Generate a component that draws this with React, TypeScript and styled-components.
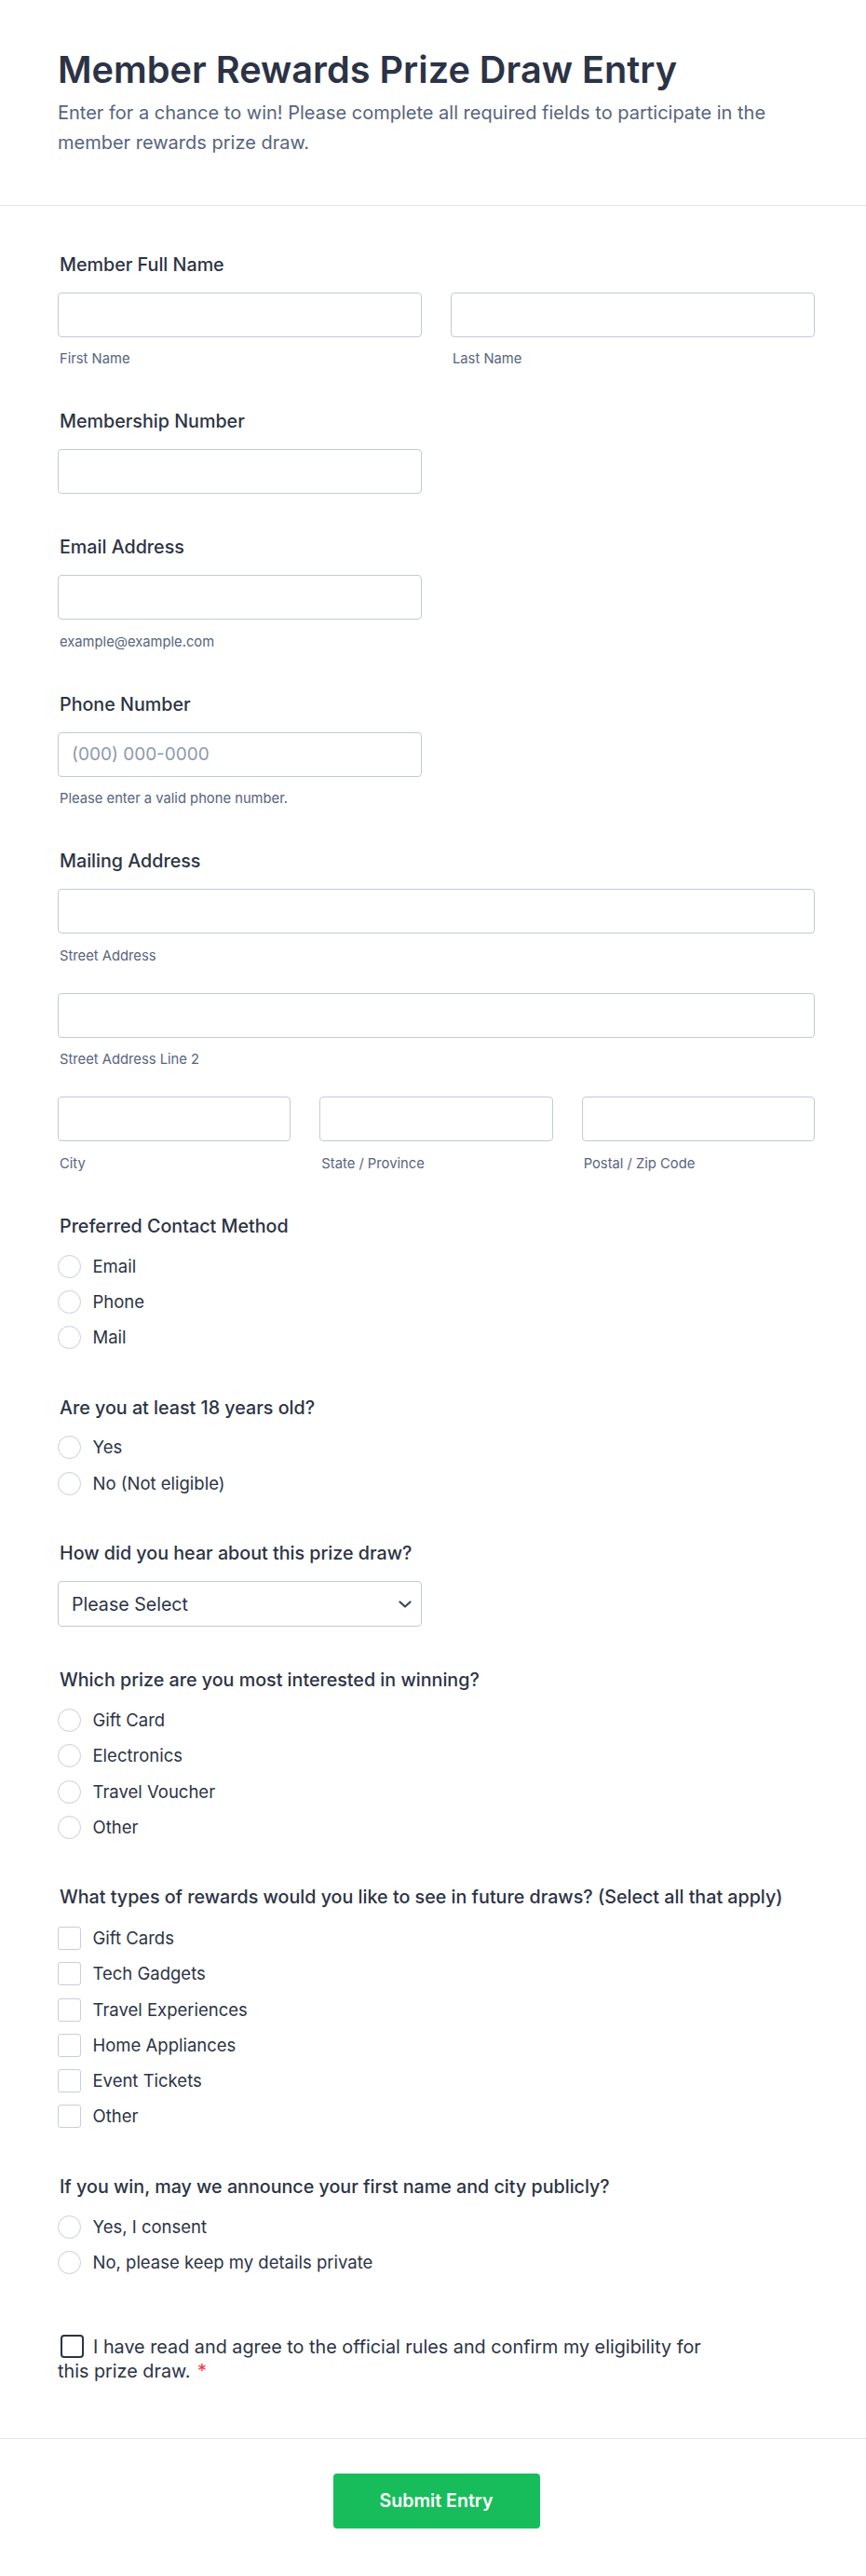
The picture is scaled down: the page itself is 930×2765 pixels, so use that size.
import styled, { createGlobalStyle } from 'styled-components'

const GlobalStyle = createGlobalStyle`
  * {
    box-sizing: border-box;
  }
  body {
    margin: 0;
    background: #ffffff;
    font-family: Inter, "Noto Sans", sans-serif;
    color: #2c3345;
  }
`

const contactMethods = ['Email', 'Phone', 'Mail']
const ageOptions = ['Yes', 'No (Not eligible)']
const prizes = ['Gift Card', 'Electronics', 'Travel Voucher', 'Other']
const rewardTypes = ['Gift Cards', 'Tech Gadgets', 'Travel Experiences', 'Home Appliances', 'Event Tickets', 'Other']
const announceOptions = ['Yes, I consent', 'No, please keep my details private']

const ChevronDown = () => (
  <svg width="14" height="8" viewBox="0 0 14 8" fill="none">
    <path d="M1.5 1.5L7 6.5L12.5 1.5" stroke="#3d475c" strokeWidth="2.2" strokeLinecap="round" strokeLinejoin="round" />
  </svg>
)

const RadioGroup = ({ name, options }: { name: string; options: string[] }) => (
  <OptionList>
    {options.map((opt) => (
      <OptionRow key={opt}>
        <Radio type="radio" name={name} />
        <OptionText>{opt}</OptionText>
      </OptionRow>
    ))}
  </OptionList>
)

export default function App() {
  return (
    <Page>
      <GlobalStyle />
      <Header>
        <Title>Member Rewards Prize Draw Entry</Title>
        <Description>
          Enter for a chance to win! Please complete all required fields to participate in the member rewards prize
          draw.
        </Description>
      </Header>

      <FormBody>
        <Field>
          <FieldLabel>Member Full Name</FieldLabel>
          <Columns $cols={2}>
            <div>
              <TextInput />
              <SubLabel>First Name</SubLabel>
            </div>
            <div>
              <TextInput />
              <SubLabel>Last Name</SubLabel>
            </div>
          </Columns>
        </Field>

        <Field>
          <FieldLabel>Membership Number</FieldLabel>
          <Columns $cols={2}>
            <TextInput />
          </Columns>
        </Field>

        <Field>
          <FieldLabel>Email Address</FieldLabel>
          <Columns $cols={2}>
            <div>
              <TextInput type="email" />
              <SubLabel>example@example.com</SubLabel>
            </div>
          </Columns>
        </Field>

        <Field>
          <FieldLabel>Phone Number</FieldLabel>
          <Columns $cols={2}>
            <div>
              <TextInput type="tel" placeholder="(000) 000-0000" />
              <SubLabel>Please enter a valid phone number.</SubLabel>
            </div>
          </Columns>
        </Field>

        <Field>
          <FieldLabel>Mailing Address</FieldLabel>
          <AddressStack>
            <div>
              <TextInput />
              <SubLabel>Street Address</SubLabel>
            </div>
            <div>
              <TextInput />
              <SubLabel>Street Address Line 2</SubLabel>
            </div>
            <Columns $cols={3}>
              <div>
                <TextInput />
                <SubLabel>City</SubLabel>
              </div>
              <div>
                <TextInput />
                <SubLabel>State / Province</SubLabel>
              </div>
              <div>
                <TextInput />
                <SubLabel>Postal / Zip Code</SubLabel>
              </div>
            </Columns>
          </AddressStack>
        </Field>

        <Field>
          <FieldLabel $gap={16.8}>Preferred Contact Method</FieldLabel>
          <RadioGroup name="contact" options={contactMethods} />
        </Field>

        <Field>
          <FieldLabel $gap={16.8}>Are you at least 18 years old?</FieldLabel>
          <RadioGroup name="age" options={ageOptions} />
        </Field>

        <Field>
          <FieldLabel>How did you hear about this prize draw?</FieldLabel>
          <Columns $cols={2}>
            <SelectWrap>
              <Select defaultValue="">
                <option value="">Please Select</option>
              </Select>
              <SelectIcon>
                <ChevronDown />
              </SelectIcon>
            </SelectWrap>
          </Columns>
        </Field>

        <Field>
          <FieldLabel $gap={16.8}>Which prize are you most interested in winning?</FieldLabel>
          <RadioGroup name="prize" options={prizes} />
        </Field>

        <Field>
          <FieldLabel $gap={17.5}>
            What types of rewards would you like to see in future draws? (Select all that apply)
          </FieldLabel>
          <OptionList $pitch={38.3}>
            {rewardTypes.map((opt) => (
              <OptionRow key={opt}>
                <Checkbox type="checkbox" />
                <OptionText>{opt}</OptionText>
              </OptionRow>
            ))}
          </OptionList>
        </Field>

        <Field>
          <FieldLabel $gap={16.8}>If you win, may we announce your first name and city publicly?</FieldLabel>
          <RadioGroup name="announce" options={announceOptions} />
        </Field>

        <ConsentField>
          <ConsentText>
            <ConsentBox type="checkbox" />I have read and agree to the official rules and confirm my eligibility for
            this prize draw. <Asterisk>*</Asterisk>
          </ConsentText>
        </ConsentField>
      </FormBody>

      <Footer>
        <SubmitButton type="button">Submit Entry</SubmitButton>
      </Footer>
    </Page>
  )
}

const Page = styled.div`
  width: 930px;
  min-height: 2765px;
  background: #ffffff;
`

const Header = styled.header`
  padding: 52px 55px 50px 62px;
  border-bottom: 1px solid #e3e5ea;
`

const Title = styled.h1`
  margin: 0;
  font-size: 39.7px;
  line-height: 47.6px;
  font-weight: 600;
  color: #2c3345;
`

const Description = styled.p`
  margin: 5.4px 0 0;
  font-size: 20px;
  line-height: 32.4px;
  color: #57647e;
`

const FormBody = styled.div`
  display: flex;
  flex-direction: column;
  gap: 44px;
  padding: 50px 55px 59px 62px;
`

const Field = styled.div`
  display: flex;
  flex-direction: column;
`

const FieldLabel = styled.label<{ $gap?: number }>`
  padding-left: 2px;
  font-size: 19.7px;
  line-height: 27px;
  font-weight: 500;
  color: #2c3345;
  margin-bottom: ${(p) => p.$gap ?? 16}px;
`

const Columns = styled.div<{ $cols: number }>`
  display: grid;
  grid-template-columns: repeat(${(p) => p.$cols}, 1fr);
  column-gap: 31px;
`

const AddressStack = styled.div`
  display: flex;
  flex-direction: column;
  gap: 30px;
`

const TextInput = styled.input`
  display: block;
  width: 100%;
  height: 48px;
  padding: 0 14px;
  border: 1px solid #c3cad8;
  border-radius: 4px;
  background: #ffffff;
  font-family: inherit;
  font-size: 19px;
  color: #2c3345;
  outline: none;

  &::placeholder {
    color: #8d99b0;
  }
`

const SubLabel = styled.div`
  margin-top: 14.5px;
  padding-left: 2px;
  font-size: 14.75px;
  line-height: 19px;
  color: #57647e;
`

const OptionList = styled.div<{ $pitch?: number }>`
  display: flex;
  flex-direction: column;
  gap: ${(p) => (p.$pitch ?? 38.3) - 25}px;
  padding-bottom: 5.5px;
`

const OptionRow = styled.label`
  display: flex;
  align-items: center;
  gap: 12.5px;
  height: 25px;
  cursor: pointer;
`

const Radio = styled.input`
  appearance: none;
  margin: 0;
  flex: none;
  width: 25px;
  height: 25px;
  border: 1.5px solid #c8cedb;
  border-radius: 50%;
  background: #ffffff;
`

const Checkbox = styled.input`
  appearance: none;
  margin: 0;
  flex: none;
  width: 25px;
  height: 25px;
  border: 1.5px solid #c8cedb;
  border-radius: 3px;
  background: #ffffff;
`

const OptionText = styled.span`
  font-size: 18.5px;
  line-height: 25px;
  color: #2c3345;
`

const SelectWrap = styled.div`
  position: relative;
`

const Select = styled.select`
  appearance: none;
  display: block;
  width: 100%;
  height: 49px;
  padding: 0 40px 0 14px;
  border: 1px solid #c3cad8;
  border-radius: 4px;
  background: #ffffff;
  font-family: inherit;
  font-size: 19.6px;
  color: #2c3345;
  outline: none;
`

const SelectIcon = styled.span`
  position: absolute;
  right: 11px;
  top: 50%;
  transform: translateY(-50%);
  display: flex;
  pointer-events: none;
`

const ConsentField = styled.div`
  margin-top: 15.3px;
`

const ConsentText = styled.p`
  margin: 0;
  max-width: 715px;
  font-size: 19.8px;
  line-height: 26px;
  color: #2c3345;
`

const ConsentBox = styled.input`
  appearance: none;
  display: inline-block;
  vertical-align: top;
  width: 25px;
  height: 25px;
  margin: 0 10px 0 3px;
  border: 2px solid #2c3345;
  border-radius: 4px;
  background: #ffffff;
`

const Asterisk = styled.span`
  color: #f23a3c;
  margin-left: 2px;
`

const Footer = styled.footer`
  display: flex;
  justify-content: center;
  padding: 37px 55px 50px 62px;
  border-top: 1px solid #e3e5ea;
`

const SubmitButton = styled.button`
  width: 222px;
  height: 59px;
  border: none;
  border-radius: 4px;
  background: #18bd5b;
  color: #ffffff;
  font-family: inherit;
  font-size: 19.6px;
  font-weight: 600;
  cursor: pointer;

  &:hover {
    background: #16a34e;
  }
`
